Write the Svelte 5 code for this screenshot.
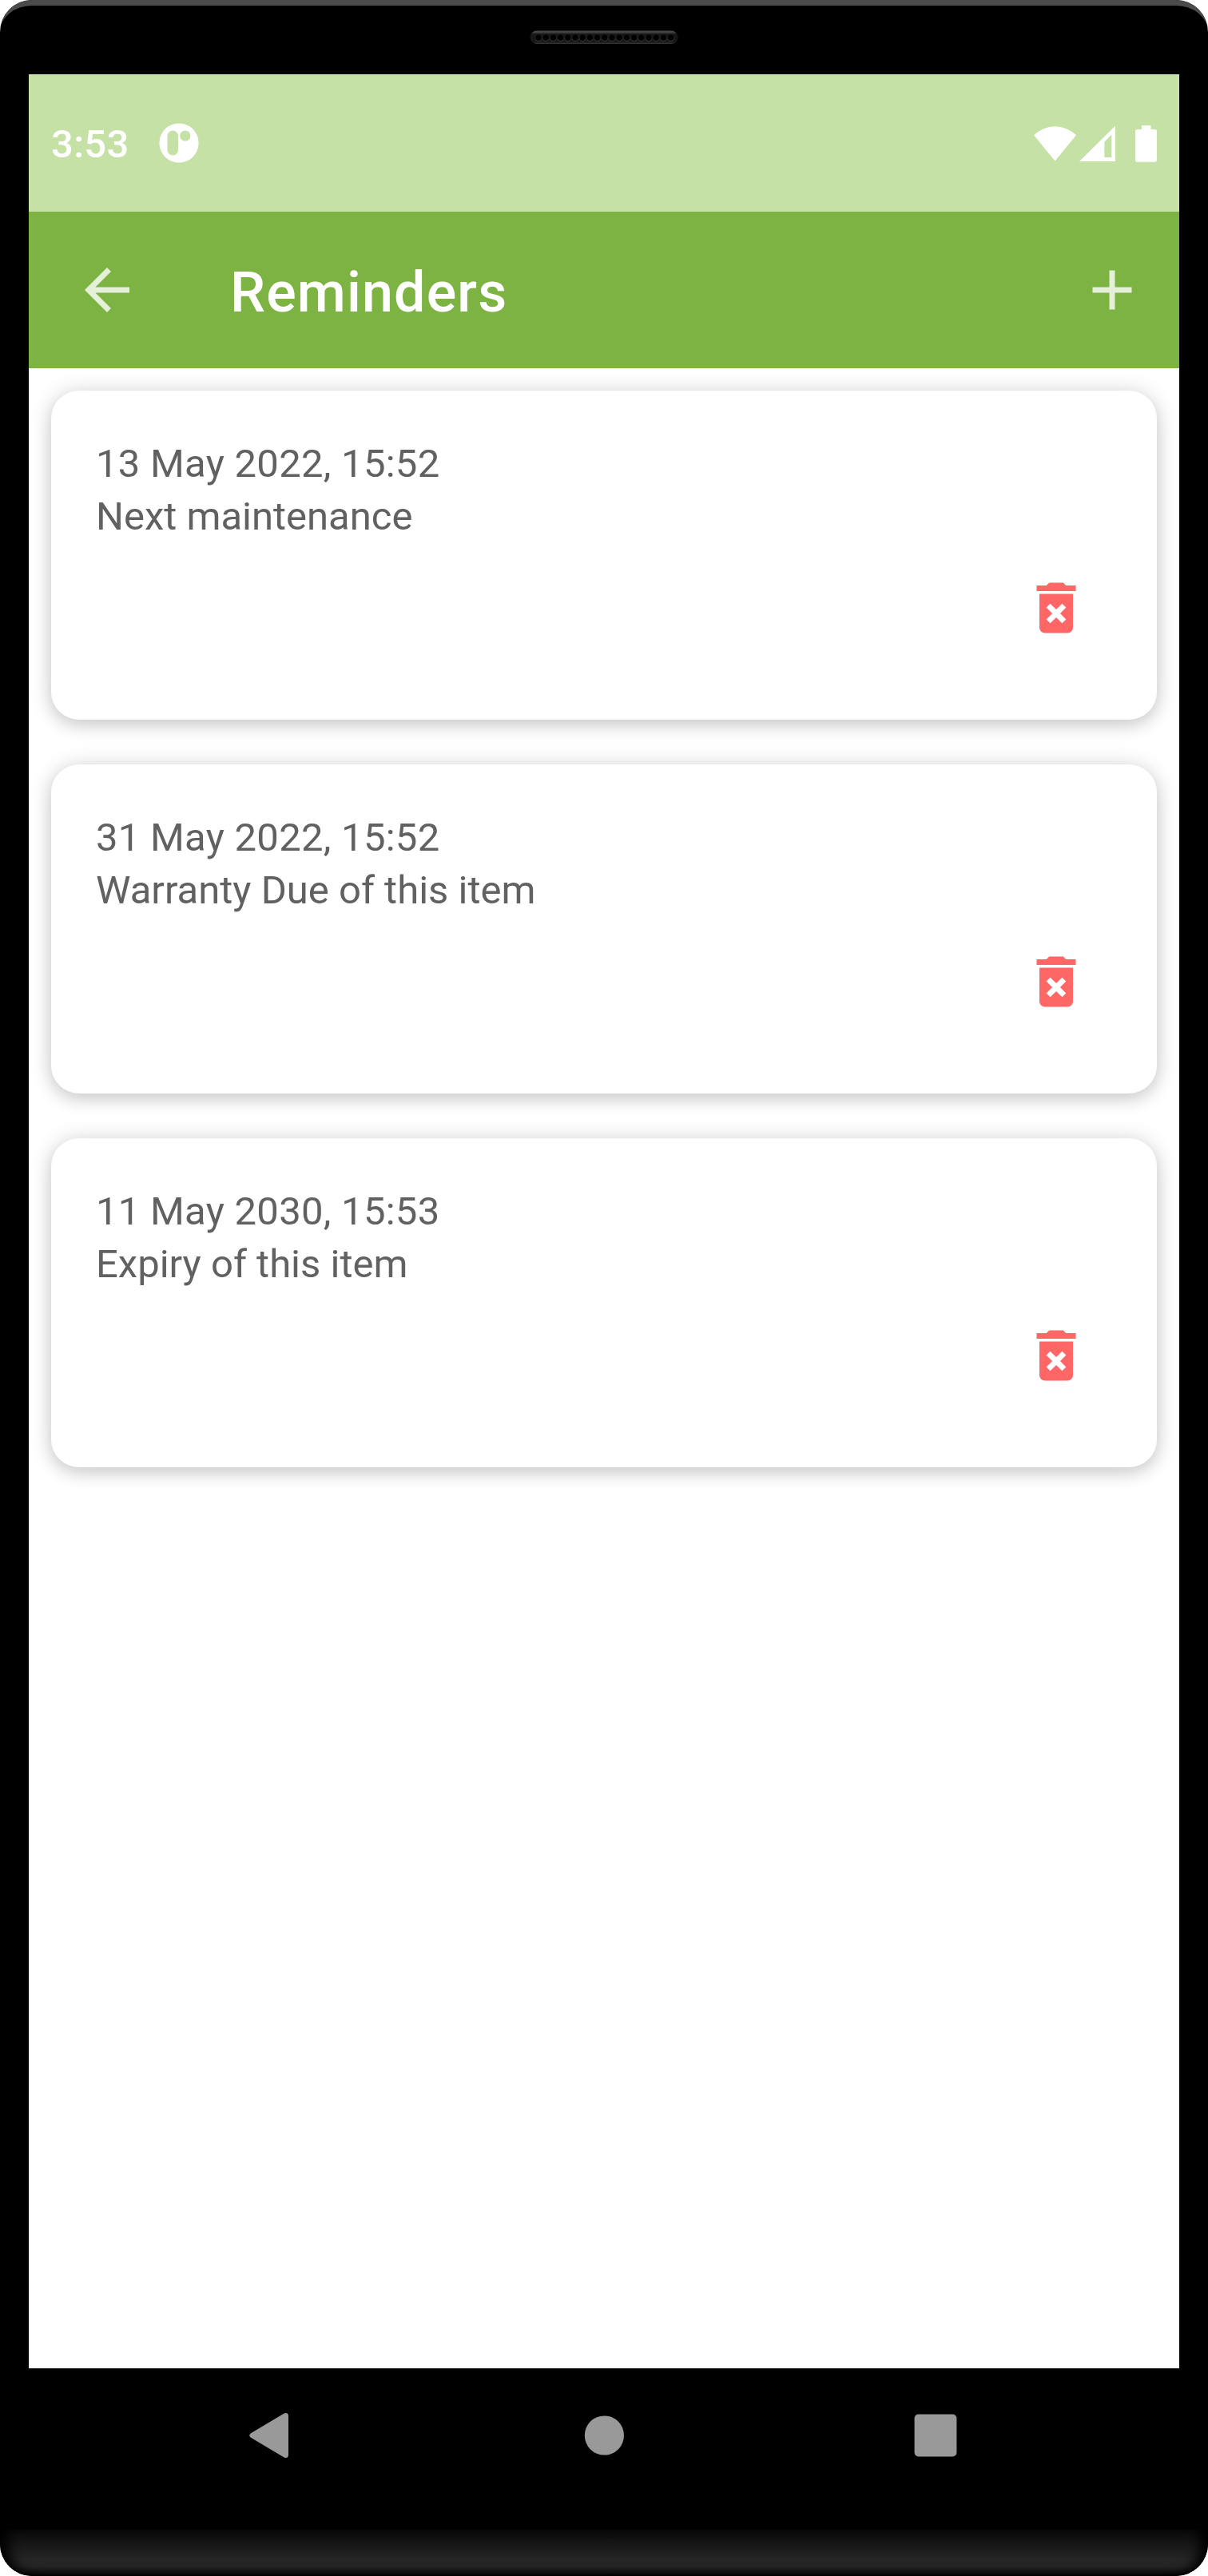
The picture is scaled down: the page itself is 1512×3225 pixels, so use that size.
<script>
  const reminders = [
    { date: '13 May 2022, 15:52', title: 'Next maintenance' },
    { date: '31 May 2022, 15:52', title: 'Warranty Due of this item' },
    { date: '11 May 2030, 15:53', title: 'Expiry of this item' },
  ];
  const holes = Array.from({ length: 19 }, (_, i) => 11 + i * 9.2);
</script>

<div class="phone">
  <div class="bezel-top">
    <svg class="speaker" width="186" height="18" viewBox="0 0 186 18">
      <defs>
        <linearGradient id="grille" x1="0" y1="0" x2="0" y2="1">
          <stop offset="0" stop-color="#505050" />
          <stop offset="0.15" stop-color="#3c3c3c" />
          <stop offset="0.25" stop-color="#181818" />
          <stop offset="0.85" stop-color="#161616" />
          <stop offset="1" stop-color="#3a3a3a" />
        </linearGradient>
      </defs>
      <rect x="0.5" y="0.5" width="185" height="16.5" rx="8.25" fill="url(#grille)" />
      {#each holes as x}
        <circle cx={x} cy="10" r="4" fill="#3c3c3c" />
        <circle cx={x} cy="9.2" r="3.7" fill="#000" />
      {/each}
    </svg>
  </div>

  <div class="screen">
    <div class="status">
      <span class="clock">3:53</span>
      <svg class="app-icon" width="50" height="50" viewBox="0 0 50 50">
        <circle cx="25" cy="25" r="24.6" fill="#fff" />
        <rect x="10.5" y="9.5" width="13.6" height="31" rx="6.8" fill="#c5e1a5" />
        <circle cx="32.8" cy="16" r="6.6" fill="#c5e1a5" />
      </svg>
      <svg class="indicators" width="156" height="48" viewBox="0 0 156 48" fill="#fff">
        <path d="M2 14.3 A37.5 37.5 0 0 1 55 14.3 L28.5 46.5 Z" />
        <path fill-rule="evenodd" d="M59 47 L104 2.5 V47 Z M90.3 22.5 V42 H99.3 V13.5 Z" />
        <path d="M137 2 H148.5 V7 H153.5 Q156 7 156 9.5 V45 Q156 47.7 153.5 47.7 H131.5 Q129 47.7 129 45 V9.5 Q129 7 131.5 7 H137 Z" />
      </svg>
    </div>

    <header class="appbar">
      <svg width="84" height="84" viewBox="0 0 24 24">
        <path d="M20 11H7.83l5.59-5.59L12 4l-8 8 8 8 1.41-1.41L7.83 13H20z" />
      </svg>
      <h1>Reminders</h1>
      <svg width="84" height="84" viewBox="0 0 24 24">
        <path d="M19 13h-6v6h-2v-6H5v-2h6V5h2v6h6z" />
      </svg>
    </header>

    <main>
      {#each reminders as r}
        <article>
          <p class="date">{r.date}</p>
          <p>{r.title}</p>
          <svg class="trash" width="84" height="84" viewBox="0 0 24 24">
            <path d="M6 19c0 1.1.9 2 2 2h8c1.1 0 2-.9 2-2V7H6v12zm2.46-7.12l1.41-1.41L12 12.59l2.12-2.12 1.41 1.41L13.41 14l2.12 2.12-1.41 1.41L12 15.41l-2.12 2.12-1.41-1.41L10.59 14l-2.13-2.12zM15.5 4l-1-1h-5l-1 1H5v2h14V4z" />
          </svg>
        </article>
      {/each}
    </main>
  </div>

  <nav>
    <svg width="60" height="60" viewBox="0 0 60 60">
      <path d="M8 27.2 L49.5 2.6 Q55 0.6 55 6 V54 Q55 59.4 49.5 57.4 L8 32.8 Q4.4 30 8 27.2 Z" />
    </svg>
    <svg width="60" height="60" viewBox="0 0 60 60"><circle cx="32.4" cy="30" r="24.6" /></svg>
    <svg width="60" height="60" viewBox="0 0 60 60"><rect x="3.6" y="3.6" width="52.8" height="52.8" rx="5" /></svg>
  </nav>
  <div class="chin"></div>
</div>

<style>
  :global(body) {
    margin: 0;
    background: #fff;
  }
  .phone {
    position: relative;
    width: 1512px;
    height: 3225px;
    display: flex;
    flex-direction: column;
    background: #000;
    border-radius: 40px;
    overflow: hidden;
    font-family: Roboto, sans-serif;
  }
  svg {
    display: block;
    flex: none;
  }
  .bezel-top {
    box-sizing: border-box;
    height: 93px;
    flex: none;
    display: flex;
    justify-content: center;
    padding-top: 31px;
    border-top: 7px solid #4b4b4b;
    border-radius: 40px 40px 0 0;
  }
  .screen {
    width: 1440px;
    height: 2872px;
    flex: none;
    margin: 0 36px;
    background: #fff;
    overflow: hidden;
  }
  .status {
    box-sizing: border-box;
    height: 172px;
    display: flex;
    align-items: center;
    padding: 0 28px 0 28px;
    background: #c5e1a5;
    color: #fff;
  }
  .clock {
    width: 135px;
    font-size: 49px;
    font-weight: 500;
    line-height: 58px;
    padding-top: 4px;
    letter-spacing: 0.3px;
  }
  .indicators {
    margin-left: auto;
  }
  .appbar {
    box-sizing: border-box;
    height: 196px;
    display: flex;
    align-items: center;
    padding: 0 42px 0 56px;
    background: #7cb342;
  }
  .appbar svg {
    fill: rgba(255, 255, 255, 0.8);
  }
  h1 {
    flex: 1;
    margin: 0;
    padding: 5px 0 0 112px;
    font-size: 70px;
    font-weight: 500;
    line-height: 82px;
    letter-spacing: 1.15px;
    color: #fff;
  }
  main {
    display: flex;
    flex-direction: column;
    gap: 56px;
    padding: 28px;
  }
  article {
    box-sizing: border-box;
    height: 412px;
    display: flex;
    flex-direction: column;
    padding: 59px 84px 0 56px;
    border-radius: 35px;
    background: #fff;
    box-shadow:
      0 8px 20px rgba(0, 0, 0, 0.1),
      0 2px 28px rgba(0, 0, 0, 0.16);
  }
  p {
    margin: 0;
    font-size: 49px;
    line-height: 66px;
    color: #616161;
    white-space: nowrap;
  }
  .date {
    letter-spacing: 0.27px;
  }
  .trash {
    align-self: flex-end;
    margin-top: 39px;
    fill: #f66;
  }
  nav {
    height: 202px;
    flex: none;
    display: flex;
    justify-content: space-between;
    align-items: flex-start;
    box-sizing: border-box;
    padding: 54px 311px 0 306px;
  }
  nav svg {
    fill: #999;
  }
  .chin {
    height: 58px;
    flex: none;
    border-radius: 0 0 40px 40px;
    background: linear-gradient(#090909, #161616 30%, #262626 65%, #242424 80%, #111 92%, #000);
    box-shadow: inset 18px 0 16px -8px #000, inset -18px 0 16px -8px #000;
  }
</style>
